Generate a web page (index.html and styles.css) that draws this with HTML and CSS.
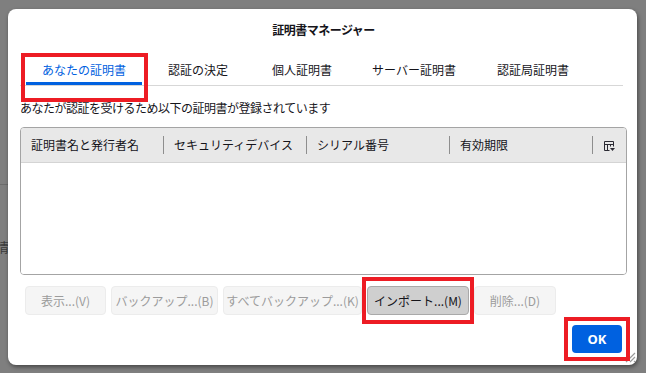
FILE: index.html
```html
<!DOCTYPE html>
<html lang="ja">
<head>
  <meta charset="UTF-8" />
  <meta name="viewport" content="width=device-width, initial-scale=1.0"/>
  <title>証明書マネージャー</title>
<link rel="stylesheet" href="styles.css">
</head>
<body>
  <!-- page behind the modal overlay -->
  <div class="backdrop">
    <span class="backdrop-rule"></span>
    <span class="backdrop-text">情</span>
  </div>

  <div class="dialog">
    <h1 class="dialog-title">証明書マネージャー</h1>

    <div class="tabs">
      <div class="tab tab-mine active">あなたの証明書</div>
      <div class="tab tab-decide">認証の決定</div>
      <div class="tab tab-people">個人証明書</div>
      <div class="tab tab-server">サーバー証明書</div>
      <div class="tab tab-ca">認証局証明書</div>
    </div>

    <p class="desc">あなたが認証を受けるため以下の証明書が登録されています</p>

    <div class="cert-table">
      <div class="cert-head">
        <div class="col">証明書名と発行者名</div>
        <div class="col">セキュリティデバイス</div>
        <div class="col">シリアル番号</div>
        <div class="col">有効期限</div>
        <div class="col-picker">
          <svg width="11" height="11" viewBox="0 0 11 11">
            <path d="M0.5 0.5h9v5M0.5 0.5v9h5M0.5 3.5h9M3.5 3.5v6M6.5 3.5v2" fill="none" stroke="#2b2a33" stroke-width="1"/>
            <path d="M6 7h5l-2.5 3z" fill="#2b2a33"/>
          </svg>
        </div>
      </div>
      <div class="cert-body"></div>
    </div>

    <div class="actions">
      <button class="btn btn-view" disabled>表示...(V)</button>
      <button class="btn btn-backup" disabled>バックアップ...(B)</button>
      <button class="btn btn-backup-all" disabled>すべてバックアップ...(K)</button>
      <button class="btn btn-import">インポート...(M)</button>
      <button class="btn btn-delete" disabled>削除...(D)</button>
    </div>

    <div class="footer">
      <button class="btn-primary">OK</button>
    </div>

    <svg class="grip" width="12" height="12" viewBox="0 0 12 12">
      <path d="M11 2L2 11M11 6L6 11M11 10L10 11" stroke="#9a9a9a" stroke-width="1.2"/>
    </svg>

    <!-- red highlight boxes -->
    <span class="mark mark-tab"></span>
    <span class="mark mark-import"></span>
    <span class="mark mark-ok"></span>
  </div>
</body>
</html>
```

FILE: styles.css
```css
body {
  margin: 0;
  width: 646px;
  height: 373px;
  overflow: hidden;
  position: relative;
  background-color: #7f7f7f;
  font-family: "Noto Sans CJK JP", "Noto Sans", sans-serif;
  font-size: 12px;
  color: #15141a;
}

.backdrop-rule {
  position: absolute;
  left: 0;
  top: 184px;
  width: 8px;
  height: 1px;
  background-color: #6c6c6c;
}

.backdrop-text {
  position: absolute;
  left: -4px;
  top: 238px;
  font-size: 13px;
  line-height: 18px;
  color: #3a3a3a;
}

.dialog {
  position: relative;
  margin: 9px 0 0 8px;
  width: 629px;
  height: 356px;
  box-sizing: border-box;
  padding: 0 10px 0 12px;
  background-color: #ffffff;
  border-radius: 8px;
  box-shadow: 1px 2px 4px rgba(0, 0, 0, 0.45);
}

.dialog-title {
  margin: 0;
  padding-top: 12px;
  font-size: 12px;
  line-height: 17px;
  font-weight: bold;
  text-align: center;
  letter-spacing: -0.5px;
}

/* tabs */
.tabs {
  display: flex;
  gap: 6px;
  margin-top: 15px;
  margin-right: 4px;
  padding-left: 6px;
  border-bottom: 1px solid #d7d7d7;
}

.tab {
  padding: 8px 0 3px;
  line-height: 18px;
  font-size: 12px;
  text-align: center;
  border-bottom: 3px solid transparent;
}

.tab.active {
  color: #0061e0;
  border-bottom-color: #0061e0;
}

.tab-mine { width: 116px; }
.tab-decide { width: 100px; }
.tab-people { width: 96px; }
.tab-server { width: 116px; }
.tab-ca { width: 110px; }

.desc {
  margin: 13px 0 0;
  line-height: 18px;
  letter-spacing: -0.5px;
}

/* certificate list */
.cert-table {
  margin-top: 10px;
  height: 148px;
  box-sizing: border-box;
  border: 1px solid #a4a4a4;
  border-radius: 4px;
  overflow: hidden;
  display: flex;
  flex-direction: column;
}

.cert-head {
  display: flex;
  align-items: center;
  height: 35px;
  box-sizing: border-box;
  background-color: #e8e8e8;
  border-bottom: 1px solid #d4d4d4;
}

.col {
  width: 143px;
  box-sizing: border-box;
  padding-left: 10px;
  font-size: 12px;
  line-height: 18px;
  border-right: 1px solid #8e8e8e;
}

.col-picker {
  flex: 1;
  display: flex;
  justify-content: center;
  padding-top: 2px;
}

.cert-body {
  flex: 1;
  background-color: #ffffff;
}

/* buttons */
.actions {
  display: flex;
  gap: 5px;
  margin-top: 11px;
  padding-left: 5px;
}

.btn {
  height: 29px;
  padding: 0;
  font-family: inherit;
  font-size: 12px;
  color: #15141a;
  background-color: #f0f0f0;
  border: 1px solid #bdbdbd;
  border-radius: 4px;
}

.btn:disabled {
  color: #9c9c9c;
  background-color: #f5f5f5;
  border-color: #ececec;
}

.btn-view { width: 81px; }
.btn-backup { width: 107px; }
.btn-backup-all { width: 139px; }
.btn-import {
  width: 102px;
  background-color: #cfcfcf;
  border-color: #a9a9a9;
}
.btn-delete { width: 82px; }

.footer {
  display: flex;
  justify-content: flex-end;
  margin-top: 10px;
  padding-right: 5px;
}

.btn-primary {
  width: 50px;
  height: 28px;
  padding: 0;
  font-family: "Noto Sans", sans-serif;
  font-size: 13px;
  font-weight: bold;
  color: #ffffff;
  background-color: #0061e0;
  border: none;
  border-radius: 4px;
}

.grip {
  position: absolute;
  right: 1px;
  bottom: 2px;
}

/* annotation boxes */
.mark {
  position: absolute;
  border: 4px solid #ed1c24;
  box-sizing: border-box;
}

.mark-tab {
  left: 13px;
  top: 44px;
  width: 127px;
  height: 49px;
}

.mark-import {
  left: 354px;
  top: 268px;
  width: 112px;
  height: 47px;
}

.mark-ok {
  left: 556px;
  top: 308px;
  width: 66px;
  height: 44px;
}
```
